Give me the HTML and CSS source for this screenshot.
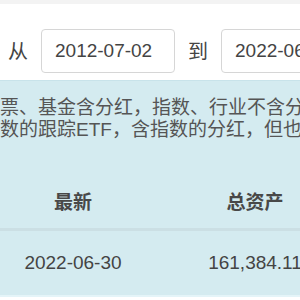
FILE: index.html
```html
<!DOCTYPE html>
<html lang="zh-CN">
<head>
  <meta charset="UTF-8" />
  <meta name="viewport" content="width=device-width, initial-scale=1.0" />
  <title>收益统计</title>
  <link rel="stylesheet" href="styles.css">
</head>
<body>
  <div class="topbar"></div>

  <div class="range">
    <span class="label">从</span>
    <input type="text" class="date" value="2012-07-02" />
    <span class="label">到</span>
    <input type="text" class="date" value="2022-06-30" />
  </div>

  <div class="info">
    <p class="note">票、基金含分红，指数、行业不含分红，</p>
    <p class="note">数的跟踪ETF，含指数的分红，但也有误差</p>

    <div class="table">
      <div class="row head">
        <div class="cell">最新</div>
        <div class="cell">总资产</div>
      </div>
      <div class="row">
        <div class="cell">2022-06-30</div>
        <div class="cell">161,384.11</div>
      </div>
    </div>
  </div>
</body>
</html>
```

FILE: styles.css
```css
html, body {
  margin: 0;
  padding: 0;
  background: #fff;
  overflow: hidden;
}
body {
  font-family: "Liberation Sans", "Noto Sans CJK SC", sans-serif;
  font-size: 19px;
  color: #444;
  width: 300px;
}
.topbar {
  height: 4px;
  background: #f3f3f3;
}
.range {
  display: flex;
  align-items: center;
  gap: 13px;
  padding: 17px 0 0 8px;
  height: 59px;
  white-space: nowrap;
}
.label {
  font-size: 20px;
  color: #444;
}
.date {
  flex: none;
  width: 134px;
  height: 44px;
  box-sizing: border-box;
  padding: 0 13px;
  border: 1px solid #d6d6d6;
  border-radius: 4px;
  font-family: inherit;
  font-size: 19px;
  color: #444;
  background: #fff;
}
.info {
  background: #d4ebf0;
  border-top: 1px solid #c8e3ea;
  border-bottom: 2px solid #e4f4f8;
  height: 217px;
  box-sizing: border-box;
  overflow: hidden;
  padding-top: 16px;
}
.note {
  margin: 0;
  line-height: 22px;
  white-space: nowrap;
  color: #555;
}
.table {
  margin-top: 31px;
  width: 380px;
}
.row {
  display: grid;
  grid-template-columns: 146px 218px;
  height: 64px;
  align-items: center;
}
.head {
  height: 56px;
  border-bottom: 3px solid #cbdfe4;
  font-weight: bold;
  color: #484848;
}
.cell {
  text-align: center;
  white-space: nowrap;
}
```
